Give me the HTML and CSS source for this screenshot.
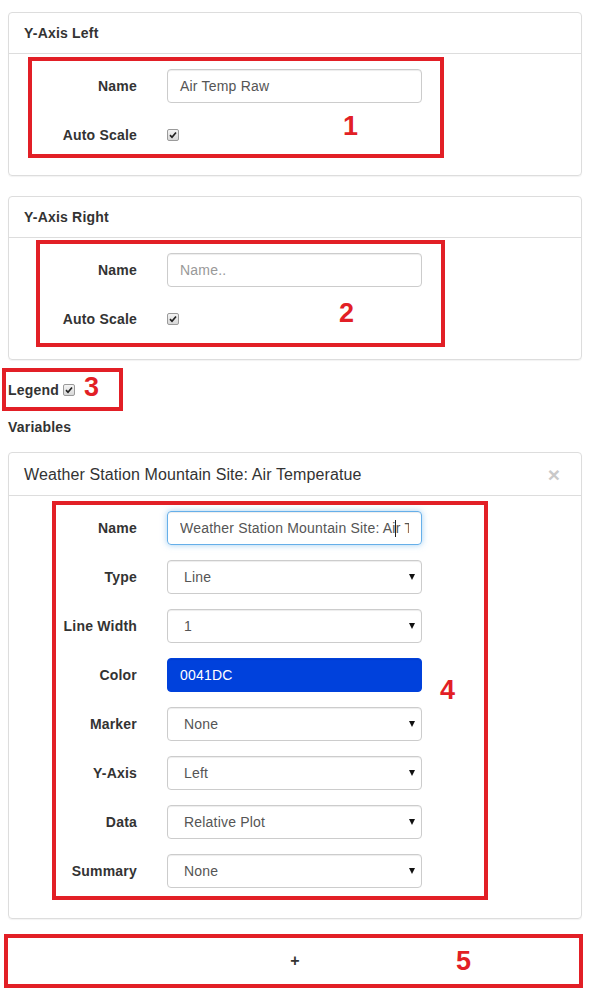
FILE: index.html
```html
<!DOCTYPE html>
<html lang="en">
<head>
<meta charset="UTF-8">
<meta name="viewport" content="width=device-width, initial-scale=1.0">
<title>Chart Options</title>
<link rel="stylesheet" href="styles.css">
</head>
<body>
<div class="page">

  <div class="panel">
    <div class="panel-heading">Y-Axis Left</div>
    <div class="panel-body">
      <div class="form-row">
        <label class="form-label">Name</label>
        <div class="form-input">Air Temp Raw</div>
      </div>
      <div class="form-row">
        <label class="form-label">Auto Scale</label>
        <span class="check"><svg width="8" height="8" viewBox="0 0 8 8"><path d="M1 4.2 L3 6.3 L7 1.5" fill="none" stroke="#222" stroke-width="1.7"/></svg></span>
      </div>
    </div>
    <div class="mark mark-1"><span class="mark-num">1</span></div>
  </div>

  <div class="panel">
    <div class="panel-heading">Y-Axis Right</div>
    <div class="panel-body">
      <div class="form-row">
        <label class="form-label">Name</label>
        <div class="form-input placeholder">Name..</div>
      </div>
      <div class="form-row">
        <label class="form-label">Auto Scale</label>
        <span class="check"><svg width="8" height="8" viewBox="0 0 8 8"><path d="M1 4.2 L3 6.3 L7 1.5" fill="none" stroke="#222" stroke-width="1.7"/></svg></span>
      </div>
    </div>
    <div class="mark mark-2"><span class="mark-num">2</span></div>
  </div>

  <div class="legend-row">
    <span class="bold-label">Legend</span>
    <span class="check"><svg width="8" height="8" viewBox="0 0 8 8"><path d="M1 4.2 L3 6.3 L7 1.5" fill="none" stroke="#222" stroke-width="1.7"/></svg></span>
    <div class="mark mark-3"><span class="mark-num">3</span></div>
  </div>

  <div class="bold-label variables-title">Variables</div>

  <div class="panel">
    <div class="panel-heading variable-heading">
      <span>Weather Station Mountain Site: Air Temperatue</span>
      <span class="close">&times;</span>
    </div>
    <div class="panel-body variable-body">
      <div class="form-row">
        <label class="form-label">Name</label>
        <div class="form-input focused"><div class="input-text">Weather Station Mountain Site: Ai<span class="caret"></span>r Temperatue</div></div>
      </div>
      <div class="form-row">
        <label class="form-label">Type</label>
        <div class="form-select"><span>Line</span><span class="arrow"></span></div>
      </div>
      <div class="form-row">
        <label class="form-label">Line Width</label>
        <div class="form-select"><span>1</span><span class="arrow"></span></div>
      </div>
      <div class="form-row">
        <label class="form-label">Color</label>
        <div class="form-input color-input">0041DC</div>
      </div>
      <div class="form-row">
        <label class="form-label">Marker</label>
        <div class="form-select"><span>None</span><span class="arrow"></span></div>
      </div>
      <div class="form-row">
        <label class="form-label">Y-Axis</label>
        <div class="form-select"><span>Left</span><span class="arrow"></span></div>
      </div>
      <div class="form-row">
        <label class="form-label">Data</label>
        <div class="form-select"><span>Relative Plot</span><span class="arrow"></span></div>
      </div>
      <div class="form-row">
        <label class="form-label">Summary</label>
        <div class="form-select"><span>None</span><span class="arrow"></span></div>
      </div>
    </div>
    <div class="mark mark-4"><span class="mark-num">4</span></div>
  </div>

  <div class="add-row">
    <button class="add-button">+</button>
    <div class="mark mark-5"><span class="mark-num">5</span></div>
  </div>

</div>
</body>
</html>
```

FILE: styles.css
```css
body {
  margin: 0;
  font-family: "Liberation Sans", Arial, sans-serif;
  font-size: 14px;
  letter-spacing: 0.2px;
  color: #333;
  background-color: #fff;
}
.page {
  padding: 12px 10px 0 8px;
}
.panel {
  position: relative;
  border: 1px solid #ddd;
  border-radius: 4px;
  margin-bottom: 20px;
  box-shadow: 0 1px 1px rgba(0, 0, 0, 0.05);
}
.panel-heading {
  padding: 10px 15px;
  line-height: 20px;
  font-weight: bold;
  border-bottom: 1px solid #ddd;
}
.panel-body {
  padding: 15px 15px 23px 15px;
  display: flex;
  flex-direction: column;
  gap: 15px;
}
.variable-heading {
  display: flex;
  justify-content: space-between;
  align-items: center;
  font-size: 16px;
  font-weight: normal;
  line-height: 22px;
  letter-spacing: 0.1px;
  padding: 11px 15px 9px 15px;
}
.close {
  font-size: 21px;
  font-weight: bold;
  color: #c9c9c9;
  margin-right: 6px;
}
.variable-body {
  padding-bottom: 30px;
}
.form-row {
  display: grid;
  grid-template-columns: 113px 255px;
  column-gap: 30px;
  align-items: center;
  height: 34px;
}
.form-label {
  text-align: right;
  font-weight: bold;
}
.form-input,
.form-select {
  box-sizing: border-box;
  height: 34px;
  border: 1px solid #ccc;
  border-radius: 4px;
  padding: 0 12px;
  line-height: 32px;
  color: #555;
  white-space: nowrap;
  overflow: hidden;
  box-shadow: inset 0 1px 1px rgba(0, 0, 0, 0.075);
}
.placeholder {
  color: #999;
}
.focused {
  border-color: #66afe9;
  box-shadow: inset 0 1px 1px rgba(0, 0, 0, .075), 0 0 6px rgba(102, 175, 233, .6);
}
.input-text {
  overflow: hidden;
  white-space: nowrap;
}
.caret {
  display: inline-block;
  width: 1px;
  height: 17px;
  background-color: #222;
  vertical-align: -4px;
  margin-left: -1px;
}
.color-input {
  background-color: #0041dc;
  border-color: #0041dc;
  color: #fff;
}
.form-select {
  display: flex;
  justify-content: space-between;
  align-items: center;
  padding: 0 6px 0 16px;
}
.arrow {
  width: 0;
  height: 0;
  border-left: 3.5px solid transparent;
  border-right: 3.5px solid transparent;
  border-top: 6px solid #111;
}
.check {
  box-sizing: border-box;
  display: inline-flex;
  align-items: center;
  justify-content: center;
  width: 12px;
  height: 12px;
  border: 1px solid #9a9a9a;
  border-radius: 2px;
  background: linear-gradient(#f4f4f4, #d8d8d8);
}
.bold-label {
  font-weight: bold;
}
.legend-row {
  position: relative;
  display: flex;
  align-items: center;
  gap: 4px;
  line-height: 20px;
  margin-top: 1px;
}
.variables-title {
  line-height: 20px;
  margin: 17px 0 15px 0;
}
.add-row {
  position: relative;
  height: 54px;
  margin-top: -5px;
}
.add-button {
  width: 100%;
  height: 54px;
  border: none;
  background: #fff;
  font-family: "Liberation Sans", Arial, sans-serif;
  font-size: 16px;
  font-weight: bold;
  color: #333;
  padding: 0;
}

/* annotation boxes */
.mark {
  position: absolute;
  box-sizing: border-box;
  border: 4px solid #e21f26;
}
.mark-num {
  position: absolute;
  font-family: "Liberation Sans", Arial, sans-serif;
  font-size: 27px;
  font-weight: bold;
  line-height: 27px;
  color: #e21f26;
}
.mark-1 { left: 19px; top: 44px; width: 416px; height: 101px; }
.mark-1 .mark-num { left: 311px; top: 52px; }
.mark-2 { left: 27px; top: 43px; width: 409px; height: 107px; }
.mark-2 .mark-num { left: 299px; top: 56px; }
.mark-3 { left: -6px; top: -12px; width: 121px; height: 43px; }
.mark-3 .mark-num { left: 78px; top: 2px; }
.mark-4 { left: 43px; top: 48px; width: 436px; height: 399px; }
.mark-4 .mark-num { left: 384px; top: 172px; }
.mark-5 { left: -4px; top: 0; width: 579px; height: 54px; }
.mark-5 .mark-num { left: 448px; top: 10px; }
```
